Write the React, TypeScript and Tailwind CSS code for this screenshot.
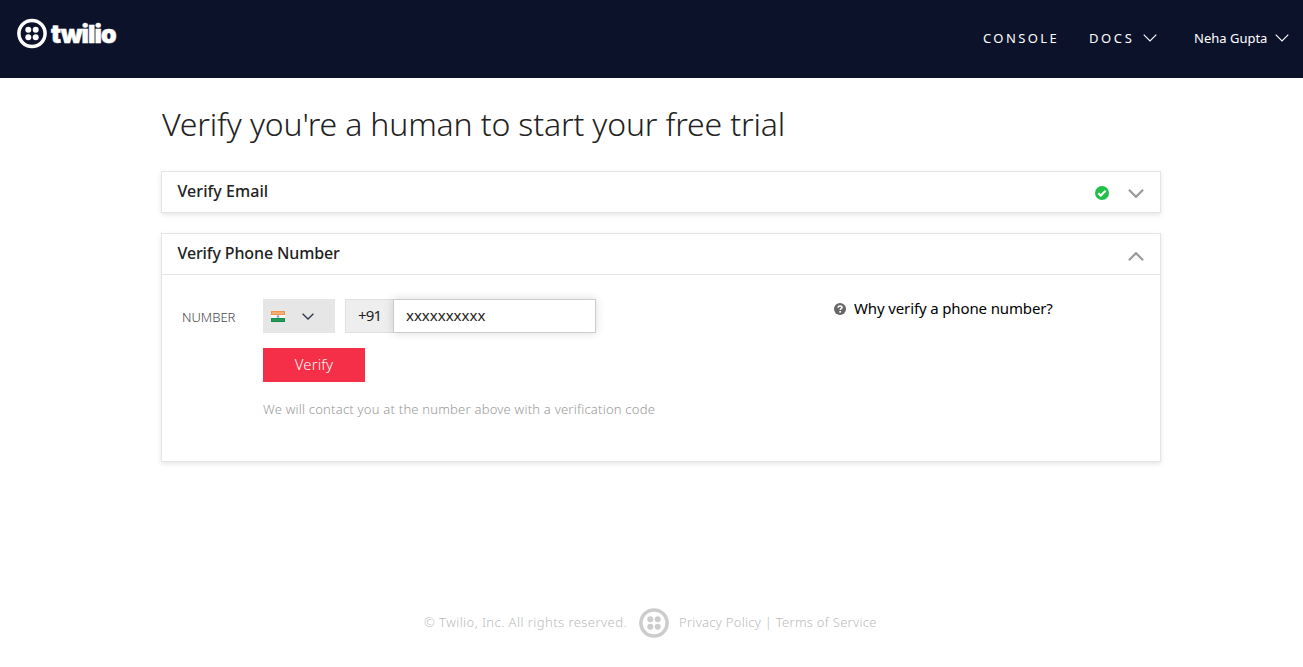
import React from "react";

function TwilioMark({ className, color }: { className: string; color: string }) {
  return (
    <svg viewBox="0 0 30 30" className={className} fill={color}>
      <circle cx="15" cy="15" r="13.1" fill="none" stroke={color} strokeWidth="3.5" />
      <circle cx="11.3" cy="11.3" r="3" />
      <circle cx="18.7" cy="11.3" r="3" />
      <circle cx="11.3" cy="18.7" r="3" />
      <circle cx="18.7" cy="18.7" r="3" />
    </svg>
  );
}

function Chevron({ className, up = false, width = 1.1 }: { className: string; up?: boolean; width?: number }) {
  return (
    <svg viewBox="0 0 14 8" className={className} fill="none" stroke="currentColor" strokeWidth={width}>
      <path d={up ? "M0.7 7.3 7 1l6.3 6.3" : "M0.7 0.7 7 7l6.3-6.3"} />
    </svg>
  );
}

function IndiaFlag() {
  return (
    <svg viewBox="0 0 14 11" className="h-[11px] w-[14px]">
      <rect width="14" height="11" fill="#f4f5f6" />
      <rect width="14" height="4" fill="#f0944d" />
      <rect x="1" y="1" width="12" height="2" fill="#f6ad73" />
      <rect y="7" width="14" height="4" fill="#128a4b" />
      <rect x="1" y="8" width="12" height="2" fill="#24995c" />
      <circle cx="7" cy="5.5" r="1.2" fill="#8c97c8" />
    </svg>
  );
}

export default function App() {
  return (
    <div className="flex h-[667px] w-full flex-col bg-white font-['Noto_Sans',sans-serif] text-[#222]">
      <header className="flex h-[78px] shrink-0 justify-between bg-[#0d122b] text-white">
        <div className="flex h-[30px] pl-[17px] pt-[18px]">
          <TwilioMark className="h-[31px] w-[30px] shrink-0" color="#fff" />
          <span className="mt-px ml-1 font-['Inter',sans-serif] text-[25px] leading-[31px] font-black tracking-[-0.95px] [-webkit-text-stroke:0.5px_#fff]">twilio</span>
        </div>
        <nav className="flex h-[76px] items-center pr-[14px] text-[13px]">
          <span className="mt-[2px] w-[106px] whitespace-nowrap pl-px tracking-[2.4px]">CONSOLE</span>
          <span className="mt-[2px] w-[55px] pl-px tracking-[2.6px]">DOCS</span>
          <Chevron className="mr-9 h-2 w-[14px]" />
          <span className="mt-[2px] w-[82px] whitespace-nowrap pl-px">Neha Gupta</span>
          <Chevron className="h-2 w-[14px]" />
        </nav>
      </header>

      <main className="ml-[161px] w-[1000px]">
        <h1 className="mt-[23px] h-[70px] whitespace-nowrap pl-px text-[32px] leading-[45px] font-light tracking-[-0.15px]">
          Verify you're a human to start your free trial
        </h1>

        <section className="flex h-[42px] items-center border border-[#e4e4e4] pr-4 pl-[15.5px] shadow-[0_2px_5px_rgba(0,0,0,0.1)]">
          <h2 className="mb-[2px] grow text-base font-medium tracking-[0.06px]">Verify Email</h2>
          <svg viewBox="0 0 14 14" className="mt-[2px] mr-[19px] size-[14px]">
            <circle cx="7" cy="7" r="7" fill="#23bf4b" />
            <path d="m3.4 7.2 2.4 2.4 4.8-4.9" fill="none" stroke="#fff" strokeWidth="2.1" />
          </svg>
          <Chevron className="mt-[3px] h-[9px] w-4 text-[#999]" width={1.9} />
        </section>

        <section className="mt-5 h-[229px] border border-[#e4e4e4] shadow-[0_2px_5px_rgba(0,0,0,0.1)]">
          <div className="flex h-[41px] items-center border-b border-[#e4e4e4] pr-4 pl-[15.5px]">
            <h2 className="mb-[2px] grow text-base font-medium tracking-[-0.12px]">Verify Phone Number</h2>
            <Chevron className="mt-1 h-[9px] w-4 text-[#999]" width={1.9} up />
          </div>
          <div className="flex pt-6 pl-5">
            <div className="w-[81px] pt-px text-[13px] leading-[34px] font-light text-[#444]">NUMBER</div>
            <div className="w-[571px]">
              <div className="flex h-[34px]">
                <div className="mr-[10px] flex w-[72px] items-center bg-[#e6e6e6] pl-2">
                  <IndiaFlag />
                  <Chevron className="ml-[17px] h-[7px] w-3 text-[#303550]" width={1.5} />
                </div>
                <div className="flex w-12 items-center border border-r-0 border-[#e0e0e0] bg-[#eee] pb-[2px] pl-3 text-[15px] tracking-[-0.8px]">+91</div>
                <input
                  className="w-[203px] border border-[#ccc] bg-white px-3 pb-px text-[15px] shadow-[0_0_9px_rgba(0,0,0,0.14)] outline-none"
                  defaultValue="xxxxxxxxxx"
                />
              </div>
              <button className="mt-[15px] block h-[34px] w-[102px] bg-[#f52f48] pb-[2px] text-[15px] font-light tracking-[0.1px] text-white">Verify</button>
              <p className="mt-[17px] whitespace-nowrap text-[13px] leading-[20px] font-light tracking-[0.22px] text-[#999]">
                We will contact you at the number above with a verification code
              </p>
            </div>
            <div className="flex h-5 items-center gap-2 whitespace-nowrap text-[15px] text-black">
              <svg viewBox="0 0 12 12" className="size-3">
                <circle cx="6" cy="6" r="6" fill="#666" />
                <path d="M4 4.7C4.1 3.5 5 3 6 3c1.2 0 2 .7 2 1.600C8 5.700 6.200 5.700 6.200 7" fill="none" stroke="#fff" strokeWidth="1.6" />
                <rect x="5.3" y="8" width="1.7" height="1.6" fill="#fff" />
              </svg>
              <span className="mb-[2px] tracking-[-0.13px]">Why verify a phone number?</span>
            </div>
          </div>
        </section>
      </main>

      <footer className="mt-[145px] flex h-[32px] items-center whitespace-nowrap pl-[424px] text-[13px] font-light text-[#bbb]">
        <span className="w-[215px] tracking-[0.44px]">© Twilio, Inc. All rights reserved.</span>
        <TwilioMark className="mr-[10px] h-[30px] w-[30px]" color="#ccc" />
        <span className="tracking-[0.28px]">Privacy Policy | Terms of Service</span>
      </footer>
    </div>
  );
}
